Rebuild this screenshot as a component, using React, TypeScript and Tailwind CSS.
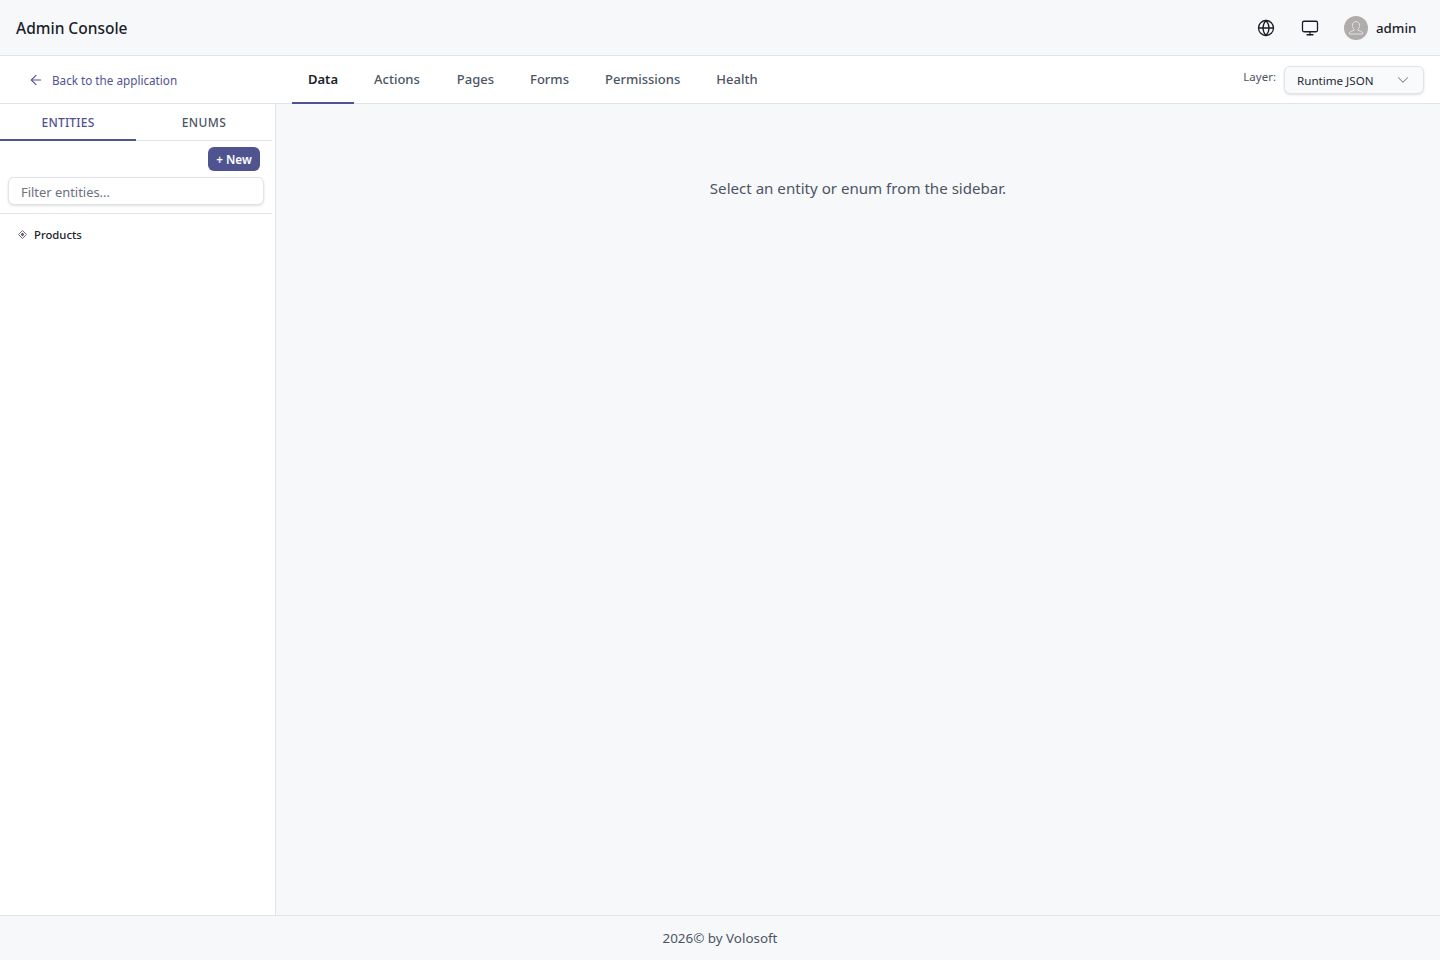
import { ArrowLeft, ChevronDown, Globe, Monitor } from "lucide-react";

const tabs = ["Data", "Actions", "Pages", "Forms", "Permissions", "Health"];

function Header() {
  return (
    <header className="h-14 shrink-0 flex items-center justify-between pl-4 pr-6 bg-[#f7f8fa] border-b border-[#e2e4e9]">
      <span className="pt-[2px] text-[15.5px] font-medium text-[#1a1d2b]">Admin Console</span>
      <div className="flex items-center">
        <Globe size={18} strokeWidth={1.7} className="text-[#1f1a28]" />
        <Monitor size={18} strokeWidth={1.7} className="ml-[26px] text-[#1f1a28]" />
        <div className="ml-[25px] w-6 h-6 rounded-full bg-[#b0acab] overflow-hidden">
          <svg width="24" height="24" viewBox="0 0 24 24" fill="none" stroke="#e4e1de" strokeWidth="1">
            <path d="M12 5.5c-2.2 0-3.6 1.7-3.6 3.9 0 1.5.6 2.8 1.6 3.6v1.3c-1.8.7-3.8 1.3-4.6 2.4v1.3h13.2v-1.3c-.8-1.1-2.8-1.7-4.6-2.4V13c1-.8 1.6-2.1 1.6-3.6 0-2.2-1.4-3.9-3.6-3.9z" />
          </svg>
        </div>
        <span className="ml-2 w-10 pt-[2px] text-[13.3px] font-medium text-[#1a1d2b]">admin</span>
      </div>
    </header>
  );
}

function SubNav() {
  return (
    <div className="h-12 shrink-0 flex items-center bg-white border-b border-[#e2e4e9]">
      <a className="w-[292px] shrink-0 pl-[28px] pt-[2px] flex items-center text-[11.7px] text-[#4f5490]">
        <ArrowLeft size={16} strokeWidth={1.6} />
        <span className="ml-2">Back to the application</span>
      </a>
      <nav className="flex h-[48px] gap-1 self-start">
        {tabs.map((tab, i) => (
          <div
            key={tab}
            className={
              i === 0
                ? "flex items-center px-4 pt-px text-[13px] font-semibold text-[#1a1d2b] border-b-2 border-[#4f5490]"
                : i === 1
                  ? "flex items-center pl-4 pr-[17px] pt-px text-[13px] font-medium text-[#4b5563] border-b-2 border-transparent"
                  : "flex items-center px-4 pt-px text-[13px] font-medium text-[#4b5563] border-b-2 border-transparent"
            }
          >
            {tab}
          </div>
        ))}
      </nav>
      <div className="ml-auto pr-4 flex items-center">
        <span className="text-[11.5px] text-[#4b5563] pb-[5px] mr-2">Layer:</span>
        <div className="w-[140px] h-7 flex items-center justify-between pl-3 pr-[11px] bg-[#f9fafb] border border-[#e2e4e9] rounded-md shadow-sm text-[11.6px] text-[#1f2937]">
          <span className="pt-[2px]">Runtime JSON</span>
          <ChevronDown size={18} strokeWidth={1.4} className="text-[#7b808a]" />
        </div>
      </div>
    </div>
  );
}

function Sidebar() {
  return (
    <aside className="w-[276px] shrink-0 bg-white border-r border-[#e2e4e9] pr-[3px]">
      <div className="flex h-[37px] border-b border-[#e2e4e9]">
        <div className="w-1/2 h-[37px] pt-[3px] flex items-center justify-center text-[12px] font-medium tracking-[0.2px] text-[#4f5490] border-b-2 border-[#4f5490]">
          ENTITIES
        </div>
        <div className="w-1/2 pt-px flex items-center justify-center text-[12px] font-medium tracking-[0.4px] text-[#4b5563]">
          ENUMS
        </div>
      </div>
      <div className="px-2 pt-[6px] pb-2 border-b border-[#e2e4e9]">
        <div className="flex justify-end pr-1">
          <button className="h-6 w-[52px] pt-px rounded-md bg-[#4f5490] text-white text-[11.8px] font-semibold">+ New</button>
        </div>
        <input
          placeholder="Filter entities..."
          className="mt-[6px] block w-full h-7 px-3 pt-[2px] text-[12.9px] bg-white border border-[#e2e4e9] rounded-md shadow-sm placeholder:text-[#6b7280] outline-none"
        />
      </div>
      <div className="flex items-center h-[42px] pl-[18px]">
        <svg width="9" height="9" viewBox="0 0 9 9" fill="none" className="mb-[2px]">
          <path d="M4.5.5l4 4-4 4-4-4z" stroke="#6b6f8f" strokeWidth="1" />
          <path d="M4.5 2.6l1.9 1.9-1.9 1.9-1.9-1.9z" fill="#8a4a66" />
        </svg>
        <span className="ml-[7px] text-[11.3px] font-medium text-[#1a1d2b]">Products</span>
      </div>
    </aside>
  );
}

export default function App() {
  return (
    <div className="h-[960px] flex flex-col bg-[#f7f8fa] font-['Noto_Sans',sans-serif]">
      <Header />
      <SubNav />
      <div className="flex flex-1 min-h-0">
        <Sidebar />
        <main className="flex-1 pt-[73px] text-center text-[15.1px] text-[#4b5563]">
          Select an entity or enum from the sidebar.
        </main>
      </div>
      <footer className="h-[45px] shrink-0 flex items-center justify-center border-t border-[#e2e4e9] pt-px text-[13.4px] text-[#4b5563]">
        2026© by Volosoft
      </footer>
    </div>
  );
}
